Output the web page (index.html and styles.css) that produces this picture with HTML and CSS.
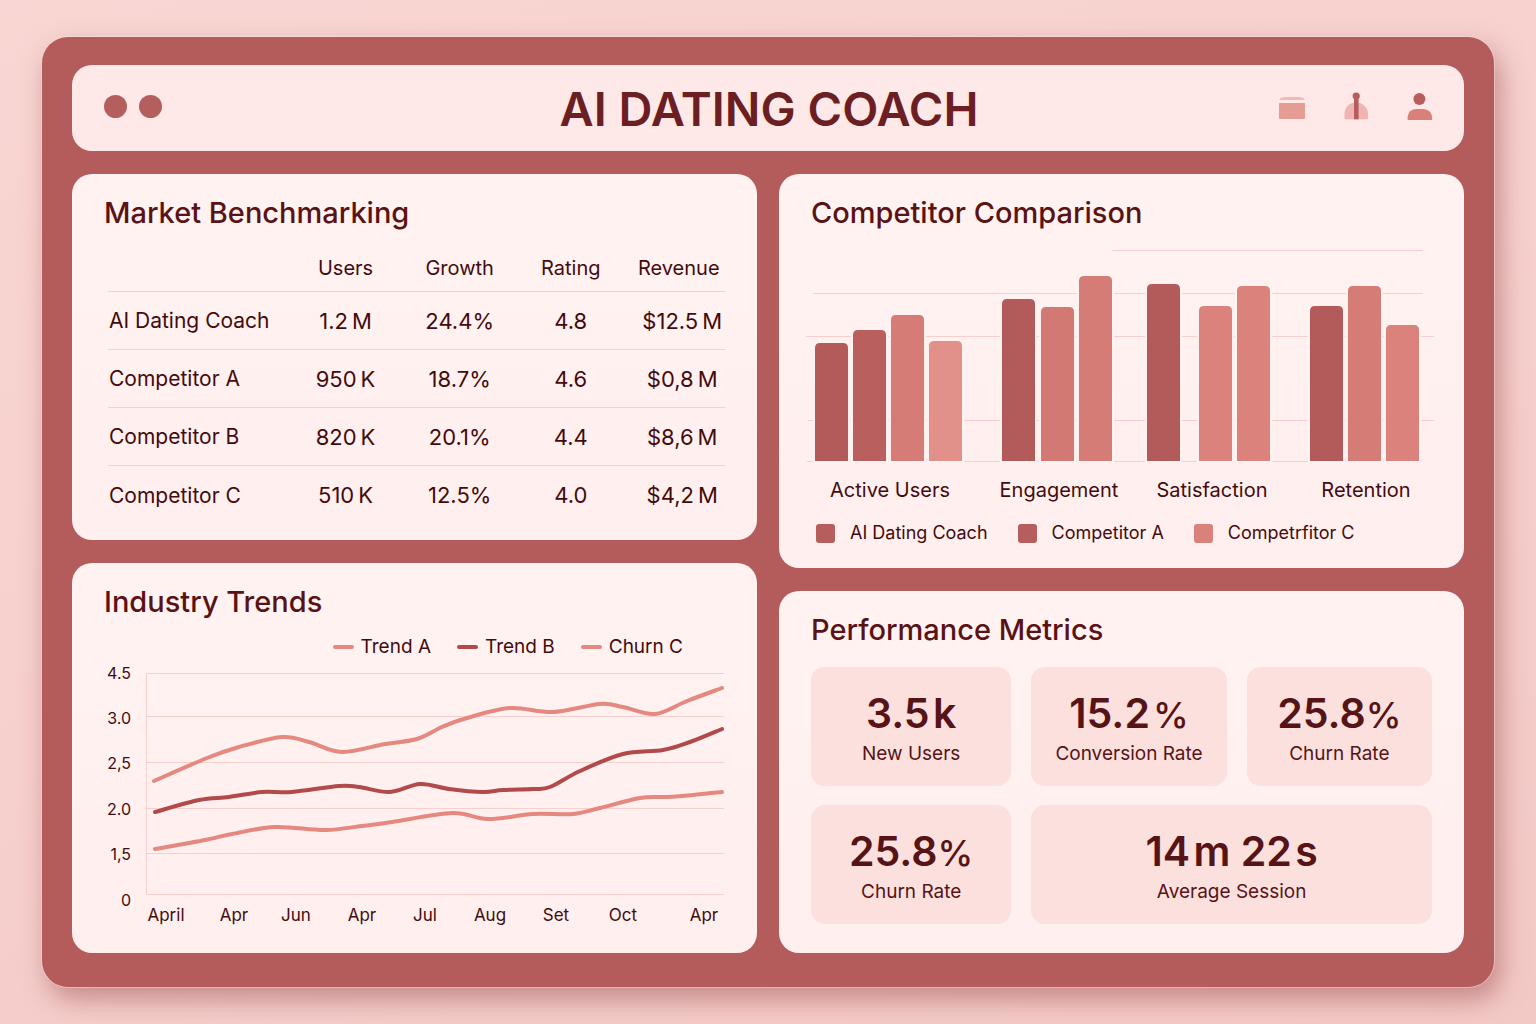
FILE: index.html
```html
<!DOCTYPE html>
<html lang="en">
<head>
<meta charset="utf-8">
<meta name="viewport" content="width=device-width, initial-scale=1">
<title>AI Dating Coach</title>
<link rel="stylesheet" href="styles.css">
</head>
<body>
<div class="frame">
  <header class="topbar">
    <div class="dots"><span class="dot"></span><span class="dot"></span></div>
    <h1 class="title">AI DATING COACH</h1>
    <nav class="actions" aria-label="Tools">
      <button class="icon-button" type="button" aria-label="Calendar">
        <svg viewBox="0 0 28 32" aria-hidden="true">
          <path fill="#f1b9b5" d="M1.500 8C2 5.800 4 5 7 5H21C24 5 26 5.800 26.500 8Z"/>
          <path fill="#e59c95" d="M1 11H27V26Q27 27 26 27H2Q1 27 1 26Z"/>
        </svg>
      </button>
      <button class="icon-button" type="button" aria-label="Insights">
        <svg viewBox="0 0 28 32" aria-hidden="true">
          <path fill="#f1b4b1" d="M3.500 27.300Q2.500 27.300 2.500 26V22C2.500 15 8 10.500 14 10.500S26 15 26 22V26Q26 27.300 25 27.300Z"/>
          <circle fill="#b85d5d" cx="14.200" cy="4" r="3.600"/>
          <path fill="#b85d5d" d="M12 4H16.600V27.300H12Z"/>
        </svg>
      </button>
      <button class="icon-button" type="button" aria-label="Profile">
        <svg viewBox="0 0 28 32" aria-hidden="true">
          <circle fill="#b85d5d" cx="13.400" cy="7" r="6"/>
          <path fill="#d9807a" d="M2.500 28Q1.500 28 1.500 27C1.500 20.500 5 17 10 17H17C22 17 26.300 20.500 26.300 27Q26.300 28 25.300 28Z"/>
        </svg>
      </button>
    </nav>
  </header>

  <main class="columns">
    <div class="column">
      <section class="panel benchmarking">
        <h2 class="heading">Market Benchmarking</h2>
        <table class="benchmarks">
          <colgroup><col class="col-name"><col class="col-users"><col class="col-growth"><col class="col-rating"><col class="col-revenue"></colgroup>
          <thead>
            <tr><td></td><th scope="col">Users</th><th scope="col">Growth</th><th scope="col">Rating</th><th scope="col">Revenue</th></tr>
          </thead>
          <tbody>
            <tr><th scope="row">AI Dating Coach</th><td>1.2&#8201;M</td><td>24.4%</td><td>4.8</td><td>$12.5&#8201;M</td></tr>
            <tr><th scope="row">Competitor A</th><td>950&#8201;K</td><td>18.7%</td><td>4.6</td><td>$0,8&#8201;M</td></tr>
            <tr><th scope="row">Competitor B</th><td>820&#8201;K</td><td>20.1%</td><td>4.4</td><td>$8,6&#8201;M</td></tr>
            <tr><th scope="row">Competitor C</th><td>510&#8201;K</td><td>12.5%</td><td>4.0</td><td>$4,2&#8201;M</td></tr>
          </tbody>
        </table>
      </section>

      <section class="panel trends">
        <h2 class="heading">Industry Trends</h2>
        <ul class="line-legend">
          <li><span class="dash"></span>Trend A</li>
          <li><span class="dash dash-dark"></span>Trend B</li>
          <li><span class="dash"></span>Churn C</li>
        </ul>
        <svg class="chart" id="trend-chart" viewBox="0 0 621 271" role="img" aria-label="Industry trends by month">
          <g class="grid">
            <path d="M42 14H620M42 57H620M42 103H620M42 149H620M42 194H620M42 235H620M42 14V235"/>
          </g>
          <g class="axis-y">
            <text x="27" y="20">4.5</text>
            <text x="27" y="65">3.0</text>
            <text x="27" y="110">2,5</text>
            <text x="27" y="156">2.0</text>
            <text x="27" y="201">1,5</text>
            <text x="27" y="247">0</text>
          </g>
          <g class="axis-x">
            <text x="62" y="262">April</text>
            <text x="130" y="262">Apr</text>
            <text x="192" y="262">Jun</text>
            <text x="258" y="262">Apr</text>
            <text x="321" y="262">Jul</text>
            <text x="386" y="262">Aug</text>
            <text x="452" y="262">Set</text>
            <text x="519" y="262">Oct</text>
            <text x="600" y="262">Apr</text>
          </g>
        </svg>
      </section>
    </div>

    <div class="column">
      <section class="panel comparison">
        <h2 class="heading">Competitor Comparison</h2>
        <svg class="chart" id="bar-chart" viewBox="0 0 621 260" role="img" aria-label="Competitor comparison by category">
          <g class="grid">
            <path d="M301 5H612M2 48H612M-5 91H623M-3 175H623M-4 216H611"/>
          </g>
          <g id="bars"></g>
          <g class="categories">
            <text x="79" y="252">Active Users</text>
            <text x="248" y="252">Engagement</text>
            <text x="401" y="252">Satisfaction</text>
            <text x="555" y="252">Retention</text>
          </g>
        </svg>
        <ul class="bar-legend">
          <li><span class="swatch"></span>AI Dating Coach</li>
          <li><span class="swatch"></span>Competitor A</li>
          <li><span class="swatch swatch-light"></span>Competrfitor C</li>
        </ul>
      </section>

      <section class="panel performance">
        <h2 class="heading">Performance Metrics</h2>
        <div class="tiles">
          <div class="tile"><p class="value">3.5&#8202;k</p><p class="label">New Users</p></div>
          <div class="tile"><p class="value">15.2<span class="percent">&#8202;%</span></p><p class="label">Conversion Rate</p></div>
          <div class="tile"><p class="value">25.8<span class="percent">%</span></p><p class="label">Churn Rate</p></div>
          <div class="tile"><p class="value">25.8<span class="percent">%</span></p><p class="label">Churn Rate</p></div>
          <div class="tile tile-wide"><p class="value">14&#8202;m 22&#8202;s</p><p class="label">Average Session</p></div>
        </div>
      </section>
    </div>
  </main>
</div>
<script src="charts.js"></script>
</body>
</html>
```
FILE: styles.css
```css
* { box-sizing: border-box; }

body {
  margin: 0;
  min-height: 100vh;
  padding: 37px 42px;
  background: linear-gradient(160deg, #f9d6d3 0%, #f6d0cd 50%, #f3c9c6 100%);
  color: #430b0d;
  font-family: Inter, "Liberation Sans", sans-serif;
}

h1, h2, p, ul { margin: 0; padding: 0; }
ul { list-style: none; }

.frame {
  padding: 28px 30px 34px;
  border-radius: 26px;
  background: #b35c5b;
  box-shadow: 0 0 0 1px rgba(255, 235, 230, 0.4), 6px 12px 26px rgba(150, 70, 70, 0.5);
}

.topbar {
  display: grid;
  grid-template-columns: 1fr auto 1fr;
  align-items: center;
  height: 86px;
  margin-bottom: 23px;
  padding: 0 30px 0 32px;
  border-radius: 20px;
  background: #ffe9e8;
}

.dots { display: flex; gap: 12px; padding-bottom: 4px; }
.dot { width: 23px; height: 23px; border-radius: 50%; background: #b55e5e; }

.title {
  padding-top: 2px;
  color: #6c1f22;
  font-size: 47px;
  font-weight: 600;
  line-height: 56px;
}

.actions { display: flex; justify-content: flex-end; gap: 36px; }
.icon-button { width: 28px; height: 32px; padding: 0; border: 0; background: none; cursor: pointer; }
.icon-button svg { display: block; width: 28px; height: 32px; }

.columns { display: grid; grid-template-columns: 1fr 1fr; gap: 22px; }
.column { display: flex; flex-direction: column; gap: 23px; min-width: 0; }

.panel {
  padding: 22px 32px 23px;
  border-radius: 20px;
  background: linear-gradient(#fff3f2, #ffefee);
}
.benchmarking { padding-bottom: 16px; }
.performance { padding-bottom: 29px; }

.heading {
  color: #5a1214;
  font-size: 29px;
  font-weight: 500;
  line-height: 34px;
}

.benchmarks {
  width: calc(100% - 4px);
  margin: 15px 0 0 4px;
  border-collapse: separate;
  border-spacing: 0;
  table-layout: fixed;
  text-align: center;
}
.col-name { width: 28%; }
.col-users { width: 21%; }
.col-growth { width: 16%; }
.col-rating { width: 20%; }
.col-revenue { width: 15%; }
.benchmarks th, .benchmarks td { padding: 0; font-weight: 400; white-space: nowrap; }
.benchmarks thead tr { height: 47px; font-size: 20px; }
.benchmarks tbody tr { height: 58px; }
.benchmarks tbody th { padding-left: 1px; font-size: 21px; text-align: left; }
.benchmarks tbody td { font-size: 22px; }
.benchmarks tbody td:last-child { padding-left: 7px; }
.benchmarks thead th, .benchmarks thead td,
.benchmarks tbody tr:not(:last-child) > * { border-bottom: 1px solid #f9cfce; }

.chart { display: block; width: 100%; height: auto; overflow: visible; }
.grid path { fill: none; stroke: #f9cfce; stroke-width: 1px; shape-rendering: crispEdges; }
.chart text { fill: #430b0d; }
.axis-y text { font-size: 16px; text-anchor: end; }
.axis-x text { font-size: 17px; text-anchor: middle; }
.categories text { font-size: 20px; text-anchor: middle; }

.comparison .chart { margin-top: 15px; }

.line { fill: none; stroke-width: 4px; stroke-linecap: round; stroke-linejoin: round; }
.bar { stroke: #fff2f1; stroke-width: 4px; paint-order: stroke; }

.line-legend {
  display: flex;
  justify-content: flex-end;
  gap: 26px;
  height: 24px;
  margin: 16px 42px 0 0;
  font-size: 19px;
  line-height: 24px;
}
.line-legend li { display: flex; align-items: center; gap: 7px; }
.dash { width: 21px; height: 4px; border-radius: 2px; background: #e5887f; }
.dash-dark { background: #b04a4b; }

.bar-legend {
  display: flex;
  gap: 30px;
  height: 24px;
  margin: 16px 0 0 5px;
  font-size: 18px;
  line-height: 24px;
}
.bar-legend li { display: flex; align-items: center; gap: 15px; }
.swatch { width: 19px; height: 19px; border-radius: 3px; background: #b65d5d; }
.swatch-light { background: #db817b; }

.tiles {
  display: grid;
  grid-template-columns: 200fr 195fr 185fr;
  gap: 19px 20px;
  margin-top: 20px;
}
.tile {
  padding: 23px 0 18px;
  border-radius: 14px;
  background: #fbe0de;
  text-align: center;
  white-space: nowrap;
}
.tile-wide { grid-column: span 2; }
.value { color: #561416; font-size: 41px; font-weight: 600; line-height: 46px; }
.percent { font-size: 36px; font-weight: 500; line-height: 36px; }
.label { margin-top: 4px; color: #561416; font-size: 19px; line-height: 28px; }
```
FILE: charts.js
```js
const SVG_NS = "http://www.w3.org/2000/svg";

function addPath(parent, className, d) {
  const path = document.createElementNS(SVG_NS, "path");
  path.setAttribute("class", className);
  path.setAttribute("d", d);
  parent.appendChild(path);
  return path;
}

// Smooth curve through every point (Catmull-Rom as cubic segments).
function smooth(points) {
  let d = "M" + points[0].join(" ");
  for (let i = 0; i < points.length - 1; i++) {
    const a = points[i - 1] || points[i];
    const b = points[i];
    const c = points[i + 1];
    const e = points[i + 2] || c;
    d += `C${b[0] + (c[0] - a[0]) / 6} ${b[1] + (c[1] - a[1]) / 6} `
      + `${c[0] - (e[0] - b[0]) / 6} ${c[1] - (e[1] - b[1]) / 6} ${c[0]} ${c[1]}`;
  }
  return d;
}

const trends = [
  { color: "#e5887f", points: [[50,122],[103,99],[135,88],[178,78],[205,83],[238,93],[281,85],[313,80],[338,68],[363,59],[406,49],[449,53],[496,45],[519,48],[551,55],[583,42],[618,29]] },
  { color: "#b04a4b", points: [[51,153],[95,141],[125,138],[158,133],[188,133],[235,127],[255,128],[286,133],[316,125],[345,130],[379,133],[399,131],[429,130],[446,128],[476,112],[519,95],[559,91],[586,83],[618,70]] },
  { color: "#e5887f", points: [[51,190],[101,181],[128,175],[171,168],[221,171],[258,167],[288,163],[348,154],[384,160],[429,155],[469,155],[496,149],[536,139],[563,138],[589,136],[618,133]] }
];
const trendChart = document.getElementById("trend-chart");
trends.forEach(t => { addPath(trendChart, "line", smooth(t.points)).style.stroke = t.color; });

// Bars: left edge, top edge, colour.
const BASE = 216;
const bars = [
  [4, 98, "#b35b5b"], [42, 85, "#b95f5e"], [80, 70, "#d67c76"], [118, 96, "#e2918a"],
  [191, 54, "#b35b5b"], [230, 62, "#d27973"], [268, 31, "#d67c76"],
  [336, 39, "#b35b5b"], [388, 61, "#da827b"], [426, 41, "#da827b"],
  [499, 61, "#b35b5b"], [537, 41, "#d67c76"], [575, 80, "#da827b"]
];
const barGroup = document.getElementById("bars");
bars.forEach(([x, top, color]) => {
  addPath(barGroup, "bar", `M${x} ${BASE}V${top + 5}q0 -5 5 -5h23q5 0 5 5V${BASE}z`).style.fill = color;
});
```
